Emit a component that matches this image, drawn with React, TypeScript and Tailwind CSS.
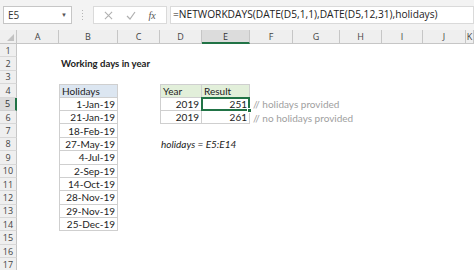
import React from 'react'

const COLS = ['A', 'B', 'C', 'D', 'E', 'F', 'G', 'H', 'I', 'J', 'K']
const ROWS = Array.from({ length: 17 }, (_, i) => i + 1)

const holidays = [
  '1-Jan-19',
  '21-Jan-19',
  '18-Feb-19',
  '27-May-19',
  '4-Jul-19',
  '2-Sep-19',
  '14-Oct-19',
  '28-Nov-19',
  '29-Nov-19',
  '25-Dec-19',
]

function Cell({ row, col }: { row: number; col: string }) {
  // Holidays table, B4:B14
  if (col === 'B' && row === 4) {
    return (
      <div className="border border-[#cfcfcf] bg-[#dce6f1] flex items-center pl-[2px]">Holidays</div>
    )
  }
  if (col === 'B' && row >= 5 && row <= 14) {
    return (
      <div className="border-x border-b border-[#cfcfcf] flex items-center justify-end pr-[2px]">{holidays[row - 5]}</div>
    )
  }
  if (col === 'B' && row === 2) {
    return <div className="flex items-center pl-[2px] font-bold text-[9.6px] whitespace-nowrap">Working days in year</div>
  }

  // Year / Result table, D4:E6
  if (row === 4 && col === 'D') {
    return <div className="border border-[#cfcfcf] bg-[#e2efda] flex items-center pl-[2px]">Year</div>
  }
  if (row === 4 && col === 'E') {
    return <div className="border-y border-r border-[#cfcfcf] bg-[#e2efda] flex items-center pl-[2px]">Result</div>
  }
  if ((row === 5 || row === 6) && col === 'D') {
    return <div className="border-x border-b border-[#cfcfcf] flex items-center justify-end pr-[2px]">2019</div>
  }
  if (row === 5 && col === 'E') {
    return (
      <div className="relative border-r border-b border-[#cfcfcf] flex items-center justify-end pr-[2px]">
        251
        <div className="absolute -left-[1px] -top-[1px] -right-[1px] -bottom-[1px] border-2 border-[#217346]" />
        <div className="absolute -right-[3px] -bottom-[3px] w-[5px] h-[5px] bg-[#217346] border border-white" />
      </div>
    )
  }
  if (row === 6 && col === 'E') {
    return <div className="border-r border-b border-[#cfcfcf] flex items-center justify-end pr-[2px]">261</div>
  }
  if (row === 5 && col === 'F') {
    return <div className="flex items-center pl-[3px] text-[#a0a0a0] whitespace-nowrap">// holidays provided</div>
  }
  if (row === 6 && col === 'F') {
    return <div className="flex items-center pl-[3px] text-[#a0a0a0] whitespace-nowrap">// no holidays provided</div>
  }
  if (row === 8 && col === 'D') {
    return <div className="flex items-center pl-[1px] italic whitespace-nowrap">holidays = E5:E14</div>
  }
  return <div />
}

export default function App() {
  return (
    <div className="w-[474px] h-[270px] overflow-hidden bg-white text-[#222] font-['Lato',sans-serif]">
      {/* formula bar */}
      <div className="h-[30px] bg-[#f3f3f3] flex items-start pt-[6px]">
        <div className="ml-[3px] w-[69px] h-[18px] bg-white border border-[#c6c6c6] flex items-center justify-between px-[4px] text-[10px] text-[#333] font-['Open_Sans',sans-serif]">
          <span>E5</span>
          <span className="text-[6px] text-[#555]">▼</span>
        </div>
        <div className="w-[21px] h-[18px] flex flex-col items-center justify-center gap-[2px]">
          <span className="w-[1px] h-[1px] bg-[#b5b5b5]" />
          <span className="w-[1px] h-[1px] bg-[#b5b5b5]" />
          <span className="w-[1px] h-[1px] bg-[#b5b5b5]" />
          <span className="w-[1px] h-[1px] bg-[#b5b5b5]" />
        </div>
        <div className="w-[74px] h-[18px] bg-white border border-[#dadada] flex items-center justify-around px-[4px]">
          <svg width="9" height="9" viewBox="0 0 10 10">
            <path d="M1 1 L9 9 M9 1 L1 9" stroke="#b0b0b0" strokeWidth="1.2" />
          </svg>
          <svg width="10" height="9" viewBox="0 0 10 9">
            <path d="M1 5 L4 8 L9 1" stroke="#b0b0b0" strokeWidth="1.2" fill="none" />
          </svg>
          <span className="italic text-[10px] text-[#555] font-['Liberation_Serif',serif]">fx</span>
        </div>
        <div className="ml-[3px] flex-1 h-[18px] bg-white border border-[#dadada] flex items-center pl-[2px] text-[10.2px] text-[#222] font-['Open_Sans',sans-serif] whitespace-nowrap overflow-hidden">
          =NETWORKDAYS(DATE(D5,1,1),DATE(D5,12,31),holidays)
        </div>
      </div>

      {/* sheet */}
      <div className="grid grid-cols-[17px_42px_59px_42px_42px_48px_43px_47px_42px_41px_43px_1fr] grid-rows-[14px_repeat(17,13.4px)] text-[10px] leading-none">
        <div className="bg-[#efefef] border-r border-b border-[#c6c6c6] relative">
          <svg className="absolute right-[2px] bottom-[2px]" width="7" height="7" viewBox="0 0 7 7">
            <path d="M7 0 L7 7 L0 7 Z" fill="#c2c2c2" />
          </svg>
        </div>
        {COLS.map((c) =>
          c === 'E' ? (
            <div
              key={c}
              className="bg-[#dcdcdc] border-b-2 border-[#217346] border-r border-r-[#c6c6c6] flex items-center justify-center text-[9px] text-[#333] font-['Open_Sans',sans-serif]"
            >
              {c}
            </div>
          ) : (
            <div
              key={c}
              className="bg-[#efefef] border-b border-r border-[#c6c6c6] flex items-center justify-center text-[9px] text-[#444] font-['Open_Sans',sans-serif]"
            >
              {c}
            </div>
          )
        )}
        {ROWS.map((r) => (
          <React.Fragment key={r}>
            {r === 5 ? (
              <div className="bg-[#dcdcdc] border-r-2 border-[#217346] border-b border-b-[#d0d0d0] flex items-center justify-center text-[9px] text-[#333] font-['Open_Sans',sans-serif]">
                {r}
              </div>
            ) : (
              <div className="bg-[#efefef] border-r border-b border-r-[#c6c6c6] border-b-[#d8d8d8] flex items-center justify-center text-[9px] text-[#444] font-['Open_Sans',sans-serif]">
                {r}
              </div>
            )}
            {COLS.map((c) => (
              <Cell key={c} row={r} col={c} />
            ))}
          </React.Fragment>
        ))}
      </div>
    </div>
  )
}
